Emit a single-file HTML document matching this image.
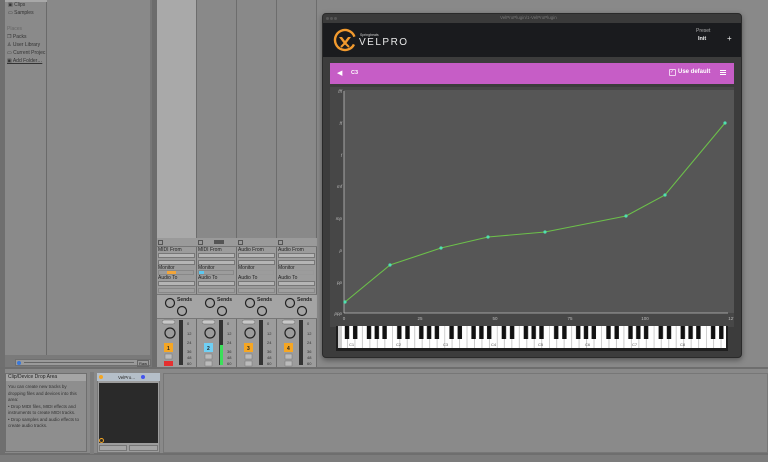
<!DOCTYPE html>
<html><head><style>
*{margin:0;padding:0;box-sizing:border-box}
body{width:768px;height:462px;overflow:hidden;background:#898989;font-family:"Liberation Sans",sans-serif;position:relative}
.a{position:absolute}
.t{position:absolute;font-size:5px;color:#222;white-space:nowrap}
.strip{position:absolute;top:238px;width:39px;height:130px;background:#9c9c9c}
.strip .dd{position:absolute;left:1px;width:37px;height:5px;background:#b9b9b9;border:1px solid #777}
.btn{position:absolute;width:9px;height:9px;font-size:5px;text-align:center;line-height:9px;color:#222;font-weight:bold}
</style></head><body>
<!-- left browser -->
<div class="a" style="left:0;top:0;width:5px;height:462px;background:#6f6f6f"></div>
<div class="a" style="left:5px;top:0;width:42px;height:355px;background:#8a8a8a;border-right:1px solid #6a6a6a"></div>
<div class="a" style="left:5px;top:0;width:42px;height:2px;background:#a8a8a8"></div>
<div class="t" style="left:8px;top:2px;color:#333">▣ Clips</div>
<div class="t" style="left:8px;top:10px;color:#333">▭ Samples</div>
<div class="t" style="left:7px;top:26px;color:#666">Places</div>
<div class="t" style="left:7px;top:34px;color:#333">❐ Packs</div>
<div class="t" style="left:7px;top:42px;color:#333">♙ User Library</div>
<div class="t" style="left:7px;top:50px;color:#333">▭ Current Projec</div>
<div class="t" style="left:7px;top:58px;color:#333;text-decoration:underline">▣ Add Folder…</div>
<div class="a" style="left:150px;top:0;width:7px;height:368px;background:#6c6c6c;border-left:2px solid #777"></div>
<div class="a" style="left:5px;top:355px;width:145px;height:12px;background:#7a7a7a"></div>
<div class="a" style="left:15px;top:359px;width:136px;height:7px;background:#9a9a9a;border:1px solid #6f6f6f"></div>
<div class="a" style="left:17px;top:361px;width:4px;height:4px;border-radius:50%;background:#3a78d8"></div>
<div class="a" style="left:24px;top:362px;width:110px;height:1px;background:#666"></div>
<div class="t" style="left:137px;top:360px;border:1px solid #666;padding:0 1px;font-size:4px">Raw</div>
<!-- mixer columns -->
<div class="a" style="left:157px;top:0;width:39px;height:238px;background:#a9a9a9"></div>
<div class="a" style="left:196px;top:0;width:1px;height:368px;background:#6d6d6d"></div>
<div class="a" style="left:236px;top:0;width:1px;height:368px;background:#6d6d6d"></div>
<div class="a" style="left:276px;top:0;width:1px;height:368px;background:#6d6d6d"></div>
<div class="a" style="left:316px;top:0;width:1px;height:368px;background:#6d6d6d"></div>

<div class="strip" style="left:157px"></div>
<div class="strip" style="left:197px"></div>
<div class="strip" style="left:237px"></div>
<div class="strip" style="left:277px"></div>
<!-- strip details -->
<div class="a" style="left:157px;top:246px;width:160px;height:1px;background:#777"></div>
<div class="a" style="left:157px;top:294px;width:160px;height:1px;background:#777"></div>
<div class="a" style="left:157px;top:318px;width:160px;height:1px;background:#777"></div>
<div class="a" style="left:157px;top:295px;width:160px;height:23px;background:#a4a4a4"></div>
<div class="t" style="left:158px;top:247px">MIDI From</div><div class="t" style="left:198px;top:247px">MIDI From</div><div class="t" style="left:238px;top:247px">Audio From</div><div class="t" style="left:278px;top:247px">Audio From</div>
<div class="a" style="left:158px;top:253px;width:37px;height:5px;background:#b5b5b5;border:1px solid #777"></div>
<div class="a" style="left:198px;top:253px;width:37px;height:5px;background:#b5b5b5;border:1px solid #777"></div>
<div class="a" style="left:238px;top:253px;width:37px;height:5px;background:#b5b5b5;border:1px solid #777"></div>
<div class="a" style="left:278px;top:253px;width:37px;height:5px;background:#b5b5b5;border:1px solid #777"></div>
<div class="a" style="left:158px;top:260px;width:37px;height:5px;background:#b5b5b5;border:1px solid #777"></div>
<div class="a" style="left:198px;top:260px;width:37px;height:5px;background:#b5b5b5;border:1px solid #777"></div>
<div class="a" style="left:238px;top:260px;width:37px;height:5px;background:#b5b5b5;border:1px solid #777"></div>
<div class="a" style="left:278px;top:260px;width:37px;height:5px;background:#b5b5b5;border:1px solid #777"></div>
<div class="t" style="left:158px;top:265px">Monitor</div><div class="t" style="left:198px;top:265px">Monitor</div><div class="t" style="left:238px;top:265px">Monitor</div><div class="t" style="left:278px;top:265px">Monitor</div>
<div class="a" style="left:167px;top:270px;width:9px;height:5px;background:#f2a53a"></div>
<div class="a" style="left:198px;top:270px;width:6px;height:5px;background:#5cc8f0"></div>
<div class="a" style="left:158px;top:270px;width:36px;height:5px;border:1px solid #888"></div>
<div class="a" style="left:198px;top:270px;width:36px;height:5px;border:1px solid #888"></div>
<div class="a" style="left:238px;top:270px;width:36px;height:5px;border:1px solid #999"></div>
<div class="a" style="left:278px;top:270px;width:36px;height:5px;border:1px solid #999"></div>
<div class="t" style="left:158px;top:275px">Audio To</div><div class="t" style="left:198px;top:275px">Audio To</div><div class="t" style="left:238px;top:275px">Audio To</div><div class="t" style="left:278px;top:275px">Audio To</div>
<div class="a" style="left:158px;top:281px;width:37px;height:5px;background:#b5b5b5;border:1px solid #777"></div>
<div class="a" style="left:198px;top:281px;width:37px;height:5px;background:#b5b5b5;border:1px solid #777"></div>
<div class="a" style="left:238px;top:281px;width:37px;height:5px;background:#b5b5b5;border:1px solid #777"></div>
<div class="a" style="left:278px;top:281px;width:37px;height:5px;background:#b5b5b5;border:1px solid #777"></div>
<div class="a" style="left:158px;top:288px;width:37px;height:5px;background:#a0a0a0;border:1px solid #888"></div>
<div class="a" style="left:198px;top:288px;width:37px;height:5px;background:#a0a0a0;border:1px solid #888"></div>
<div class="a" style="left:238px;top:288px;width:37px;height:5px;background:#a0a0a0;border:1px solid #888"></div>
<div class="a" style="left:278px;top:288px;width:37px;height:5px;background:#a0a0a0;border:1px solid #888"></div>
<!-- knobs -->
<svg class="a" style="left:157px;top:295px" width="160" height="73">
<g fill="none" stroke="#222" stroke-width="1.2">
<circle cx="13" cy="8" r="4.5"/><circle cx="25" cy="16" r="4.5"/><circle cx="53" cy="8" r="4.5"/><circle cx="65" cy="16" r="4.5"/>
<circle cx="93" cy="8" r="4.5"/><circle cx="105" cy="16" r="4.5"/><circle cx="133" cy="8" r="4.5"/><circle cx="145" cy="16" r="4.5"/>
<circle cx="13" cy="38" r="5"/><circle cx="53" cy="38" r="5"/><circle cx="93" cy="38" r="5"/><circle cx="133" cy="38" r="5"/>
</g>
<g font-size="5" fill="#222" font-weight="bold"><text x="20" y="6">Sends</text><text x="60" y="6">Sends</text><text x="100" y="6">Sends</text><text x="140" y="6">Sends</text></g>
<g fill="#c8c8c8" stroke="#666" stroke-width=".5"><rect x="5" y="25" width="13" height="4" rx="2"/><rect x="45" y="25" width="13" height="4" rx="2"/><rect x="85" y="25" width="13" height="4" rx="2"/><rect x="125" y="25" width="13" height="4" rx="2"/></g>
<g fill="#333"><rect x="22" y="25" width="4" height="45"/><rect x="62" y="25" width="4" height="45"/><rect x="102" y="25" width="4" height="45"/><rect x="142" y="25" width="4" height="45"/></g>
<rect x="63" y="50" width="3" height="20" fill="#3be05a"/>
<g fill="#f5a623"><rect x="7" y="48" width="9" height="9"/><rect x="87" y="48" width="9" height="9"/><rect x="127" y="48" width="9" height="9"/></g>
<rect x="47" y="48" width="9" height="9" fill="#6fd0f5"/>
<g font-size="5" fill="#222" font-weight="bold"><text x="10" y="55">1</text><text x="50" y="55">2</text><text x="90" y="55">3</text><text x="130" y="55">4</text></g>
<g fill="#bbb" stroke="#777" stroke-width=".5"><rect x="8" y="59" width="7" height="5"/><rect x="48" y="59" width="7" height="5"/><rect x="88" y="59" width="7" height="5"/><rect x="128" y="59" width="7" height="5"/><rect x="48" y="66" width="7" height="5"/><rect x="88" y="66" width="7" height="5"/><rect x="128" y="66" width="7" height="5"/></g>
<rect x="7" y="66" width="9" height="5" fill="#e53030"/>
<g font-size="4" fill="#333"><text x="30" y="30">0</text><text x="30" y="40">12</text><text x="30" y="49">24</text><text x="30" y="58">36</text><text x="30" y="64">48</text><text x="30" y="70">60</text>
<text x="70" y="30">0</text><text x="70" y="40">12</text><text x="70" y="49">24</text><text x="70" y="58">36</text><text x="70" y="64">48</text><text x="70" y="70">60</text>
<text x="110" y="30">0</text><text x="110" y="40">12</text><text x="110" y="49">24</text><text x="110" y="58">36</text><text x="110" y="64">48</text><text x="110" y="70">60</text>
<text x="150" y="30">0</text><text x="150" y="40">12</text><text x="150" y="49">24</text><text x="150" y="58">36</text><text x="150" y="64">48</text><text x="150" y="70">60</text></g>
</svg>
<div class="a" style="left:157px;top:238px;width:160px;height:8px;background:#9a9a9a"></div>
<div class="a" style="left:158px;top:240px;width:5px;height:5px;border:1px solid #555"></div>
<div class="a" style="left:198px;top:240px;width:5px;height:5px;border:1px solid #555"></div>
<div class="a" style="left:214px;top:240px;width:10px;height:4px;background:#555"></div>
<div class="a" style="left:238px;top:240px;width:5px;height:5px;border:1px solid #555"></div>
<div class="a" style="left:278px;top:240px;width:5px;height:5px;border:1px solid #555"></div>

<!-- bottom pane -->
<div class="a" style="left:0;top:367px;width:768px;height:2px;background:#6e6e6e"></div>
<div class="a" style="left:0;top:453px;width:768px;height:2px;background:#6e6e6e"></div>
<div class="a" style="left:0;top:455px;width:768px;height:7px;background:#7c7c7c"></div>
<div class="a" style="left:5px;top:373px;width:82px;height:79px;background:#8e8e8e;border:1px solid #6f6f6f"></div>
<div class="a" style="left:6px;top:374px;width:80px;height:7px;background:#a5a5a5"></div>
<div class="t" style="left:8px;top:374px;font-size:5px">Clip/Device Drop Area</div>
<div class="t" style="left:8px;top:384px;font-size:4.5px;color:#333;line-height:6.5px;white-space:normal;width:76px">You can create new tracks by dropping files and devices into this area:<br>• Drop MIDI files, MIDI effects and instruments to create MIDI tracks.<br>• Drop samples and audio effects to create audio tracks.</div>
<div class="a" style="left:90px;top:372px;width:4px;height:82px;background:#7d7d7d"></div>
<div class="a" style="left:97px;top:373px;width:63px;height:80px;background:#9d9d9d;border:1px solid #777"></div>
<div class="a" style="left:97px;top:373px;width:63px;height:8px;background:#b5bfc9"></div>
<div class="a" style="left:99px;top:375px;width:4px;height:4px;border-radius:50%;background:#f5a623"></div>
<div class="t" style="left:118px;top:375px;font-size:4.5px">VelPro...</div>
<div class="a" style="left:141px;top:375px;width:4px;height:4px;border-radius:50%;background:#4455ee"></div>
<div class="a" style="left:99px;top:383px;width:59px;height:60px;background:#2a2a2a"></div>
<div class="a" style="left:99px;top:438px;width:5px;height:5px;border-radius:50%;border:1px solid #f5a623"></div>
<div class="a" style="left:99px;top:445px;width:28px;height:6px;border:1px solid #777;background:#a5a5a5"></div>
<div class="a" style="left:129px;top:445px;width:29px;height:6px;border:1px solid #777;background:#a5a5a5"></div>
<div class="a" style="left:163px;top:373px;width:605px;height:80px;background:#8a8a8a;border:1px solid #777"></div>

<!-- plugin window -->
<div class="a" style="left:322px;top:13px;width:420px;height:345px;background:#3c3c3c;border:1px solid #2a2a2a;border-radius:4px;box-shadow:0 2px 6px rgba(0,0,0,.4)"></div>
<div class="a" style="left:323px;top:14px;width:418px;height:9px;background:#3a3a3a;border-radius:4px 4px 0 0"></div>
<div class="t" style="left:500px;top:15px;font-size:4.5px;color:#777">VelProPlugin/1-VelProPlugin</div>
<div class="a" style="left:326px;top:17px;width:3px;height:3px;border-radius:50%;background:#555;box-shadow:4px 0 #555,8px 0 #555"></div>
<div class="a" style="left:323px;top:23px;width:418px;height:34px;background:#1a1b1e"></div>
<svg class="a" style="left:333px;top:28px" width="24" height="24"><circle cx="12" cy="12" r="10" fill="none" stroke="#f29a2e" stroke-width="2.4" stroke-dasharray="40 8" transform="rotate(110 12 12)"/><path d="M6 9 L12 17 L18 9 L15 9 L12 13 L9 9Z" fill="#f29a2e"/><path d="M8 19 L12 15 L16 19" fill="none" stroke="#f29a2e" stroke-width="2"/></svg>
<div class="t" style="left:360px;top:33px;font-size:3.5px;color:#ccc">Springbeats</div>
<div class="t" style="left:359px;top:37px;font-size:10px;color:#e8e8e8;letter-spacing:1.5px">VELPRO</div>
<div class="t" style="left:696px;top:28px;font-size:5px;color:#aaa">Preset</div>
<div class="t" style="left:698px;top:36px;font-size:5.5px;color:#eee;font-weight:bold">Init</div>
<div class="t" style="left:727px;top:34px;font-size:8px;color:#eee">+</div>
<div class="a" style="left:330px;top:63px;width:404px;height:21px;background:#c65dc6"></div>
<div class="t" style="left:337px;top:69px;font-size:7px;color:#fff">◀</div>
<div class="t" style="left:351px;top:70px;font-size:5.5px;color:#fff;font-weight:bold">C3</div>
<div class="a" style="left:669px;top:69px;width:7px;height:7px;border:1px solid #f0d0f0;border-radius:1px"></div>
<div class="t" style="left:670px;top:69px;font-size:5px;color:#fff">✓</div>
<div class="t" style="left:678px;top:69px;font-size:6px;color:#fff;font-weight:bold">Use default</div>
<div class="a" style="left:720px;top:70px;width:6px;height:1px;background:#fff;box-shadow:0 2px #fff,0 4px #fff"></div>
<div class="a" style="left:330px;top:87px;width:404px;height:240px;background:#474747"></div>
<svg class="a" style="left:330px;top:87px" width="404" height="240">
<rect x="14" y="3" width="394" height="223" fill="#565656"/>
<line x1="14" y1="4" x2="14" y2="226" stroke="#bbb" stroke-width=".8"/>
<line x1="14" y1="226" x2="398" y2="226" stroke="#bbb" stroke-width=".8"/>
<g font-size="4.5" fill="#bbb" font-style="italic" text-anchor="end"><text x="12" y="6">fff</text><text x="12" y="38">ff</text><text x="12" y="70">f</text><text x="12" y="101">mf</text><text x="12" y="133">mp</text><text x="12" y="165">p</text><text x="12" y="197">pp</text><text x="12" y="228">ppp</text></g>
<g font-size="4.5" fill="#bbb" text-anchor="middle"><text x="14" y="233">0</text><text x="90" y="233">25</text><text x="165" y="233">50</text><text x="240" y="233">75</text><text x="315" y="233">100</text><text x="402" y="233">127</text></g>
<polyline points="15,215 60,178 111,161 158,150 215,145 296,129 335,108 395,36" fill="none" stroke="#6cc04a" stroke-width="1.1"/>
<g fill="#4fe0b0"><circle cx="15" cy="215" r="1.6"/><circle cx="60" cy="178" r="1.6"/><circle cx="111" cy="161" r="1.6"/><circle cx="158" cy="150" r="1.6"/><circle cx="215" cy="145" r="1.6"/><circle cx="296" cy="129" r="1.6"/><circle cx="335" cy="108" r="1.6"/><circle cx="395" cy="36" r="1.6"/></g>
</svg>
<svg class="a" style="left:336px;top:326px" width="392" height="25">
<defs><pattern id="oct" x="4" y="0" width="52.3" height="25" patternUnits="userSpaceOnUse">
<rect width="52.3" height="25" fill="#fff"/>
<g stroke="#999" stroke-width=".5"><line x1="0.2" y1="0" x2="0.2" y2="22"/><line x1="7.47" y1="0" x2="7.47" y2="22"/><line x1="14.94" y1="0" x2="14.94" y2="22"/><line x1="22.41" y1="0" x2="22.41" y2="22"/><line x1="29.88" y1="0" x2="29.88" y2="22"/><line x1="37.35" y1="0" x2="37.35" y2="22"/><line x1="44.82" y1="0" x2="44.82" y2="22"/></g>
<g fill="#111"><rect x="4.8" y="0" width="4.4" height="13"/><rect x="13" y="0" width="4.4" height="13"/><rect x="26.8" y="0" width="4.4" height="13"/><rect x="34.6" y="0" width="4.4" height="13"/><rect x="42.4" y="0" width="4.4" height="13"/></g>
</pattern></defs>
<rect x="0" y="0" width="392" height="25" fill="#1e1e1e"/>
<rect x="2" y="0" width="388" height="22" fill="url(#oct)"/>
<rect x="2" y="0" width="4" height="22" fill="#ccc"/>
<g font-size="4" fill="#555"><text x="13" y="20">C1</text><text x="60" y="20">C2</text><text x="107" y="20">C3</text><text x="155" y="20">C4</text><text x="202" y="20">C5</text><text x="249" y="20">C6</text><text x="296" y="20">C7</text><text x="344" y="20">C8</text></g>
</svg>
</body></html>
